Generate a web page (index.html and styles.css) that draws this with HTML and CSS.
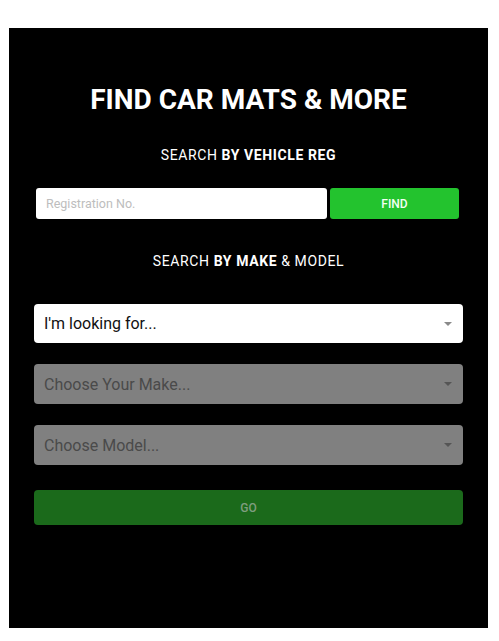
FILE: index.html
```html
<!DOCTYPE html>
<html lang="en">
<head>
<meta charset="utf-8">
<title>Find Car Mats</title>
<link rel="stylesheet" href="styles.css">
</head>
<body>
<div class="panel">
  <h1 class="title">FIND CAR MATS &amp; MORE</h1>
  <p class="sub sub-reg">SEARCH <b>BY VEHICLE REG</b></p>
  <div class="reg-row">
    <input class="reg-input" type="text" placeholder="Registration No.">
    <button class="find-btn" type="button">FIND</button>
  </div>
  <p class="sub sub-make">SEARCH <b>BY MAKE</b> &amp; MODEL</p>
  <div class="selects">
    <div class="select">
      <span class="select-text">I'm looking for...</span>
      <span class="caret"></span>
    </div>
    <div class="select disabled">
      <span class="select-text">Choose Your Make...</span>
      <span class="caret"></span>
    </div>
    <div class="select disabled">
      <span class="select-text">Choose Model...</span>
      <span class="caret"></span>
    </div>
    <button class="go-btn" type="button">GO</button>
  </div>
</div>
</body>
</html>
```
FILE: styles.css
```css
* { box-sizing: border-box; }
html, body { margin: 0; padding: 0; background: #ffffff; }
body { font-family: Roboto, "Liberation Sans", Arial, sans-serif; }

.panel {
  margin: 28px 0 0 9px;
  width: 479px;
  height: 600px;
  background: #000000;
  padding: 55px 25px 0 25px;
  color: #ffffff;
}

.title {
  margin: 0;
  font-size: 28px;
  line-height: 34px;
  font-weight: 700;
  text-align: center;
}

.sub {
  margin: 0;
  font-size: 14px;
  line-height: 17px;
  font-weight: 400;
  letter-spacing: 0.6px;
  text-align: center;
}
.sub b { font-weight: 700; }
.sub-reg { margin-top: 30px; }
.sub-make { margin-top: 34px; }

.reg-row {
  display: flex;
  gap: 3px;
  margin: 24px 4px 0 2px;
  height: 31px;
}
.reg-input {
  flex: 0 0 291px;
  height: 31px;
  border: 0;
  border-radius: 3px;
  background: #ffffff;
  padding: 0 10px;
  font-family: inherit;
  font-size: 12.5px;
  color: #333;
  outline: none;
}
.reg-input::placeholder { color: #bdbdbd; }
.find-btn {
  flex: 1;
  height: 31px;
  border: 0;
  border-radius: 3px;
  background: #23c32e;
  color: #f4fff4;
  font-family: inherit;
  font-size: 12px;
  font-weight: 500;
  padding: 0;
}

.selects {
  margin-top: 34px;
  display: flex;
  flex-direction: column;
}
.select {
  height: 40px;
  border-radius: 4px;
  background: #ffffff;
  display: flex;
  align-items: center;
  justify-content: space-between;
  padding: 0 11px 0 10px;
  margin-bottom: 21px;
}
.select:first-child { height: 39px; }
.select-text {
  font-size: 16px;
  color: #111111;
}
.select.disabled { background: #808080; }
.select.disabled .select-text { color: #4a4a4a; }
.caret {
  width: 0;
  height: 0;
  border-left: 4px solid transparent;
  border-right: 4px solid transparent;
  border-top: 4px solid #8a8a8a;
}
.select.disabled .caret { border-top-color: #555555; }

.go-btn {
  margin-top: 4px;
  height: 35px;
  border: 0;
  border-radius: 4px;
  background: #1b6a1b;
  color: #7f9d7f;
  font-family: inherit;
  font-size: 12px;
  font-weight: 500;
}
```
